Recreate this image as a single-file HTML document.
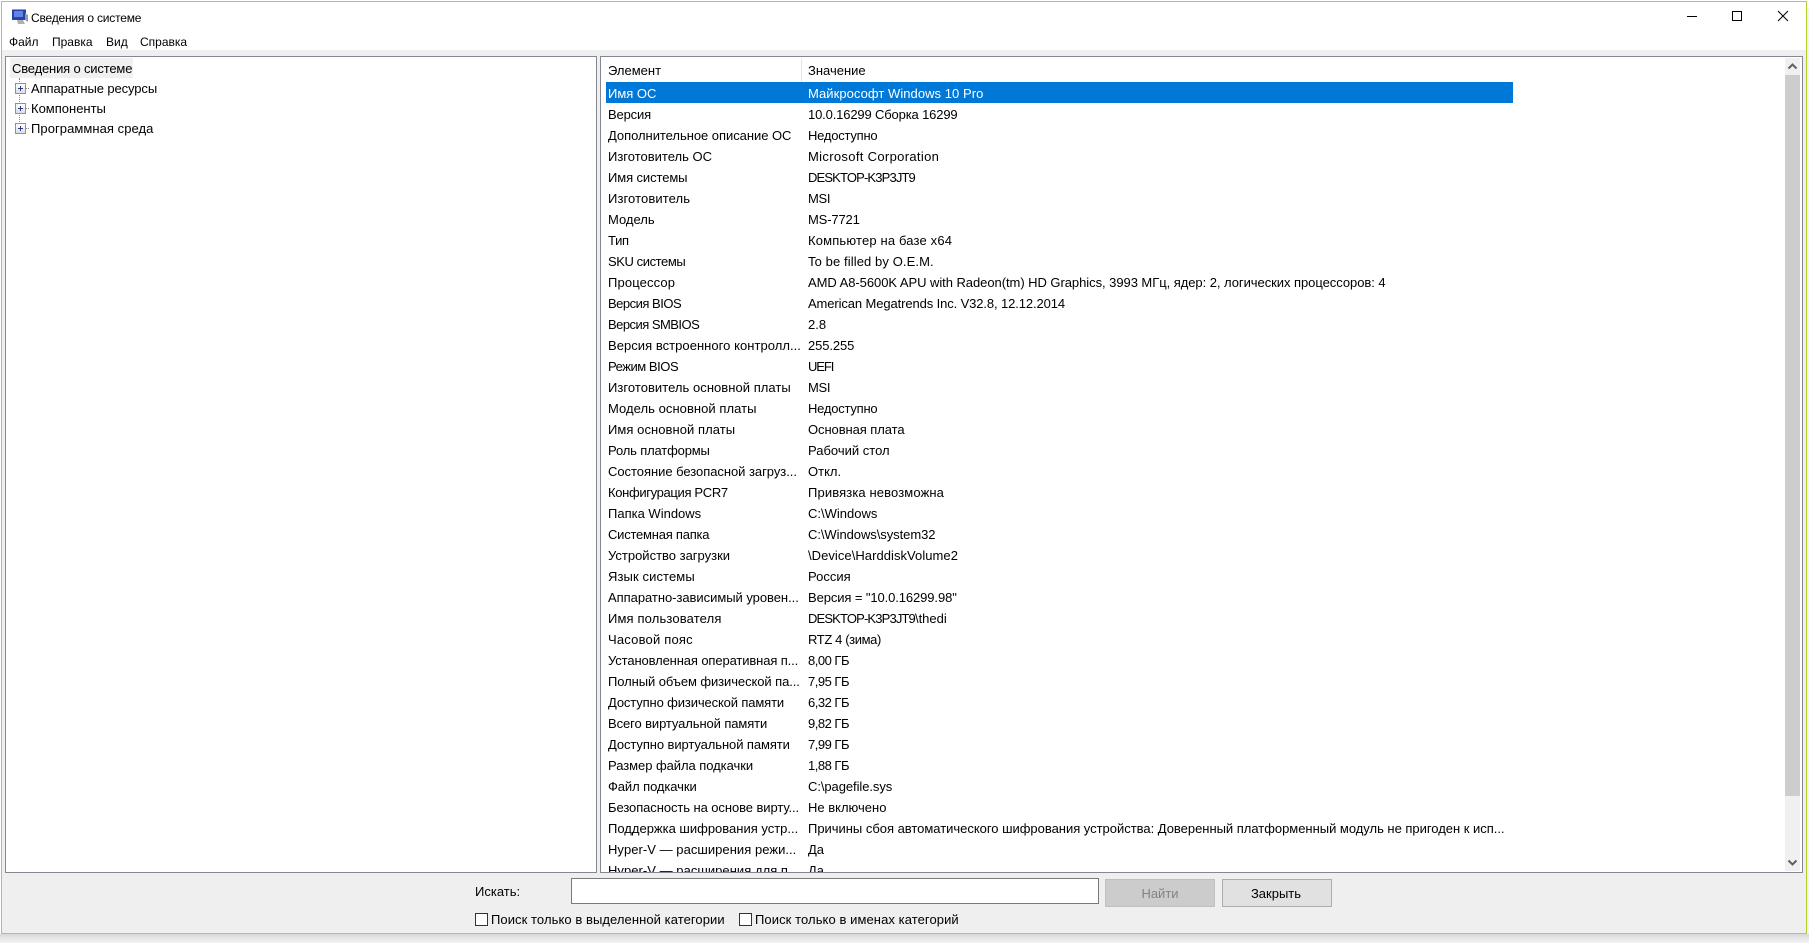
<!DOCTYPE html>
<html lang="ru"><head><meta charset="utf-8"><title>Сведения о системе</title>
<style>
html,body{margin:0;padding:0;width:1809px;height:943px;overflow:hidden;background:#fff}
body{position:relative;font:13px/20px "Liberation Sans","Noto Sans CJK SC",sans-serif;color:#000}
.a{position:absolute;white-space:nowrap}
#win{left:1px;top:1px;width:1806px;height:933px;background:#efefef;border:1px solid #b5cf2a;box-sizing:border-box}
#shadow{left:0;top:934px;width:1809px;height:9px;background:linear-gradient(#d8d8d8,#f4f4f4)}
#shadowr{left:1807px;top:8px;width:2px;height:926px;background:#f2f2f2}
#top{left:2px;top:2px;width:1804px;height:48px;background:#fff}
.pane{background:#fff;border:1px solid #828790;box-sizing:border-box}
.row{position:absolute;left:608px;height:21px;line-height:21px;white-space:nowrap}
.row b{font-weight:normal;position:absolute;left:0;top:1px}
.row i{font-style:normal;position:absolute;left:200px;top:1px}
.cb{width:11px;height:11px;border:1px solid #333;background:#fff}
.plus{width:9px;height:9px;border:1px solid #919191;background:linear-gradient(#fff,#ddd)}
.plus:before{content:"";position:absolute;left:2px;top:4px;width:5px;height:1px;background:#2b3a80}
.plus:after{content:"";position:absolute;left:4px;top:2px;width:1px;height:5px;background:#2b3a80}
.m{font-size:12px}
</style></head><body>
<div class="a" id="shadow"></div>
<div class="a" id="shadowr"></div>
<div class="a" id="win"></div>
<div class="a" id="top"></div>

<svg class="a" style="left:11px;top:8px" width="18" height="18" viewBox="0 0 18 18"><rect x="1" y="1" width="14" height="11" fill="#2a3fb0"/><rect x="3" y="3" width="9" height="6" fill="#5d86e0"/><path d="M1 1h14v1H1z" fill="#8fa0c8"/><path d="M6 12h6l2 4H7z" fill="#b0b0b0"/><path d="M14 5l3 2v7l-3-2z" fill="#9a9a9a"/></svg>
<div class="a m" style="left:31px;top:8px;letter-spacing:-.2px">Сведения о системе</div>
<div class="a m" style="left:9px;top:32px">Файл</div>
<div class="a m" style="left:52px;top:32px">Правка</div>
<div class="a m" style="left:106px;top:32px">Вид</div>
<div class="a m" style="left:140px;top:32px">Справка</div>

<svg class="a" style="left:1680px;top:5px" width="115" height="22" viewBox="0 0 115 22"><path d="M7 11.5h10" stroke="#000" fill="none"/><rect x="52.5" y="6.5" width="9" height="9" stroke="#000" fill="none" stroke-width="1"/><path d="M98 6l10 10M108 6L98 16" stroke="#000" fill="none"/></svg>

<div class="a pane" style="left:5px;top:56px;width:592px;height:817px"></div>
<div class="a" style="left:10px;top:58px;width:123px;height:20px;background:#f0f0f0"></div>
<div class="a" style="left:12px;top:59px;letter-spacing:-.17px">Сведения о системе</div>
<div class="a" style="left:19px;top:78px;height:50px;border-left:1px dotted #888"></div>
<div class="a" style="left:25px;top:88px;width:4px;border-top:1px dotted #888"></div>
<div class="a" style="left:25px;top:108px;width:4px;border-top:1px dotted #888"></div>
<div class="a" style="left:25px;top:128px;width:4px;border-top:1px dotted #888"></div>
<div class="a plus" style="left:15px;top:83px"></div>
<div class="a plus" style="left:15px;top:103px"></div>
<div class="a plus" style="left:15px;top:123px"></div>
<div class="a" style="left:31px;top:79px;letter-spacing:-.1px">Аппаратные ресурсы</div>
<div class="a" style="left:31px;top:99px">Компоненты</div>
<div class="a" style="left:31px;top:119px;letter-spacing:.06px">Программная среда</div>

<div class="a pane" style="left:600px;top:56px;width:1203px;height:817px"></div>
<div class="a" style="left:801px;top:58px;width:1px;height:24px;background:#e5e5e5"></div>
<div class="a" style="left:608px;top:61px">Элемент</div>
<div class="a" style="left:808px;top:61px">Значение</div>
<div class="a" style="left:606px;top:82px;width:907px;height:21px;background:#0078d7"></div>

<div class="a" style="left:601px;top:82px;width:1184px;height:790px;overflow:hidden">
<div style="position:absolute;left:-601px;top:-82px;width:1809px;height:943px">
<div class="row" style="top:82px;color:#fff"><b>Имя ОС</b><i style="letter-spacing:.05px">Майкрософт Windows 10 Pro</i></div>
<div class="row" style="top:103px"><b style="letter-spacing:-.15px">Версия</b><i style="letter-spacing:-.15px">10.0.16299 Сборка 16299</i></div>
<div class="row" style="top:124px"><b style="letter-spacing:-.04px">Дополнительное описание ОС</b><i style="letter-spacing:-.23px">Недоступно</i></div>
<div class="row" style="top:145px"><b>Изготовитель ОС</b><i style="letter-spacing:.33px">Microsoft Corporation</i></div>
<div class="row" style="top:166px"><b style="letter-spacing:-.1px">Имя системы</b><i style="letter-spacing:-.85px">DESKTOP-K3P3JT9</i></div>
<div class="row" style="top:187px"><b style="letter-spacing:.1px">Изготовитель</b><i style="letter-spacing:-.3px">MSI</i></div>
<div class="row" style="top:208px"><b>Модель</b><i style="letter-spacing:-.15px">MS-7721</i></div>
<div class="row" style="top:229px"><b style="letter-spacing:-.3px">Тип</b><i style="letter-spacing:.16px">Компьютер на базе x64</i></div>
<div class="row" style="top:250px"><b style="letter-spacing:-.42px">SKU системы</b><i style="letter-spacing:.1px">To be filled by O.E.M.</i></div>
<div class="row" style="top:271px"><b style="letter-spacing:.13px">Процессор</b><i style="letter-spacing:-.05px">AMD A8-5600K APU with Radeon(tm) HD Graphics, 3993 МГц, ядер: 2, логических процессоров: 4</i></div>
<div class="row" style="top:292px"><b style="letter-spacing:-.5px">Версия BIOS</b><i style="letter-spacing:-.11px">American Megatrends Inc. V32.8, 12.12.2014</i></div>
<div class="row" style="top:313px"><b style="letter-spacing:-.53px">Версия SMBIOS</b><i>2.8</i></div>
<div class="row" style="top:334px"><b style="letter-spacing:.04px">Версия встроенного контролл...</b><i style="letter-spacing:-.1px">255.255</i></div>
<div class="row" style="top:355px"><b style="letter-spacing:-.46px">Режим BIOS</b><i style="letter-spacing:-1.1px">UEFI</i></div>
<div class="row" style="top:376px"><b style="letter-spacing:.04px">Изготовитель основной платы</b><i style="letter-spacing:-.3px">MSI</i></div>
<div class="row" style="top:397px"><b style="letter-spacing:.05px">Модель основной платы</b><i style="letter-spacing:-.23px">Недоступно</i></div>
<div class="row" style="top:418px"><b style="letter-spacing:.06px">Имя основной платы</b><i style="letter-spacing:-.08px">Основная плата</i></div>
<div class="row" style="top:439px"><b style="letter-spacing:-.16px">Роль платформы</b><i>Рабочий стол</i></div>
<div class="row" style="top:460px"><b style="letter-spacing:-.04px">Состояние безопасной загруз...</b><i>Откл.</i></div>
<div class="row" style="top:481px"><b style="letter-spacing:-.34px">Конфигурация PCR7</b><i style="letter-spacing:.12px">Привязка невозможна</i></div>
<div class="row" style="top:502px"><b>Папка Windows</b><i>C:\Windows</i></div>
<div class="row" style="top:523px"><b style="letter-spacing:-.23px">Системная папка</b><i style="letter-spacing:-.06px">C:\Windows\system32</i></div>
<div class="row" style="top:544px"><b>Устройство загрузки</b><i style="letter-spacing:.05px">\Device\HarddiskVolume2</i></div>
<div class="row" style="top:565px"><b style="letter-spacing:.1px">Язык системы</b><i>Россия</i></div>
<div class="row" style="top:586px"><b style="letter-spacing:-.04px">Аппаратно-зависимый уровен...</b><i style="letter-spacing:-.1px">Версия = "10.0.16299.98"</i></div>
<div class="row" style="top:607px"><b style="letter-spacing:.14px">Имя пользователя</b><i><span style="letter-spacing:-.85px">DESKTOP-K3P3JT9</span>\thedi</i></div>
<div class="row" style="top:628px"><b style="letter-spacing:.2px">Часовой пояс</b><i style="letter-spacing:-.38px">RTZ 4 (зима)</i></div>
<div class="row" style="top:649px"><b style="letter-spacing:-.12px">Установленная оперативная п...</b><i style="letter-spacing:-.5px">8,00 ГБ</i></div>
<div class="row" style="top:670px"><b style="letter-spacing:-.08px">Полный объем физической па...</b><i style="letter-spacing:-.5px">7,95 ГБ</i></div>
<div class="row" style="top:691px"><b style="letter-spacing:-.13px">Доступно физической памяти</b><i style="letter-spacing:-.5px">6,32 ГБ</i></div>
<div class="row" style="top:712px"><b style="letter-spacing:-.1px">Всего виртуальной памяти</b><i style="letter-spacing:-.5px">9,82 ГБ</i></div>
<div class="row" style="top:733px"><b style="letter-spacing:-.09px">Доступно виртуальной памяти</b><i style="letter-spacing:-.5px">7,99 ГБ</i></div>
<div class="row" style="top:754px"><b style="letter-spacing:-.05px">Размер файла подкачки</b><i style="letter-spacing:-.5px">1,88 ГБ</i></div>
<div class="row" style="top:775px"><b style="letter-spacing:-.09px">Файл подкачки</b><i style="letter-spacing:-.07px">C:\pagefile.sys</i></div>
<div class="row" style="top:796px"><b style="letter-spacing:-.08px">Безопасность на основе вирту...</b><i>Не включено</i></div>
<div class="row" style="top:817px"><b>Поддержка шифрования устр...</b><i style="letter-spacing:-.02px">Причины сбоя автоматического шифрования устройства: Доверенный платформенный модуль не пригоден к исп...</i></div>
<div class="row" style="top:838px"><b style="letter-spacing:.04px">Hyper-V — расширения режи...</b><i>Да</i></div>
<div class="row" style="top:859px"><b style="letter-spacing:.04px">Hyper-V — расширения для п...</b><i>Да</i></div>
</div></div>

<div class="a" style="left:1785px;top:58px;width:15px;height:813px;background:#f0f0f0"></div>
<div class="a" style="left:1785px;top:75px;width:15px;height:721px;background:#cdcdcd"></div>
<svg class="a" style="left:1785px;top:58px" width="15" height="17" viewBox="0 0 15 17"><path d="M3.5 10.5L7.5 6.5l4 4" stroke="#606060" stroke-width="2" fill="none"/></svg>
<svg class="a" style="left:1785px;top:854px" width="15" height="17" viewBox="0 0 15 17"><path d="M3.5 6.5l4 4 4-4" stroke="#606060" stroke-width="2" fill="none"/></svg>

<div class="a" style="left:475px;top:882px">Искать:</div>
<div class="a" style="left:571px;top:878px;width:528px;height:26px;background:#fff;border:1px solid #7a7a7a;box-sizing:border-box"></div>
<div class="a" style="left:1105px;top:879px;width:110px;height:28px;background:#ccc;border:1px solid #bfbfbf;box-sizing:border-box;text-align:center;line-height:27px;color:#838383">Найти</div>
<div class="a" style="left:1222px;top:879px;width:110px;height:28px;background:#e1e1e1;border:1px solid #adadad;box-sizing:border-box;text-align:center;line-height:27px;padding-right:2px">Закрыть</div>
<div class="a cb" style="left:475px;top:913px"></div>
<div class="a" style="left:491px;top:910px;letter-spacing:.07px">Поиск только в выделенной категории</div>
<div class="a cb" style="left:739px;top:913px"></div>
<div class="a" style="left:755px;top:910px;letter-spacing:.08px">Поиск только в именах категорий</div>
</body></html>
